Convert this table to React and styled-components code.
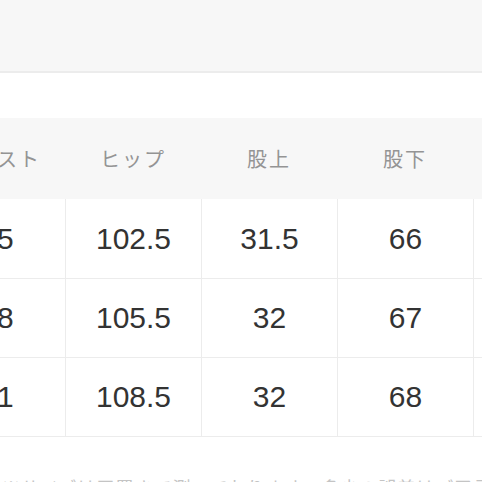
import React from 'react';
import styled, { createGlobalStyle } from 'styled-components';

const GlobalStyles = createGlobalStyle`
  html, body {
    margin: 0;
    padding: 0;
    background: #ffffff;
    overflow: hidden;
  }
  body {
    font-family: "Liberation Sans", "Noto Sans CJK JP", sans-serif;
  }
`;

const Page = styled.div`
  width: 482px;
  height: 482px;
  overflow: hidden;
  background: #fff;
`;

const TopBar = styled.div`
  height: 71px;
  background: #f7f7f7;
  border-bottom: 2px solid #ececec;
`;

const Gap = styled.div`
  height: 45px;
`;

const Table = styled.div`
  margin-left: -71px;
  width: 680px;
  border-bottom: 1px solid #ececec;
`;

const HeadRow = styled.div`
  display: grid;
  grid-template-columns: repeat(5, 136px);
  height: 81px;
  background: #f7f7f7;
`;

const HeadCell = styled.div`
  display: flex;
  align-items: center;
  justify-content: center;
  font-family: "Noto Sans CJK JP", sans-serif;
  font-size: 20px;
  letter-spacing: 2px;
  color: #949494;
`;

const Row = styled.div`
  display: grid;
  grid-template-columns: repeat(5, 136px);
  height: 79px;
  border-top: ${p => (p.$first ? 'none' : '1px solid #ececec')};
  box-sizing: border-box;
`;

const Cell = styled.div`
  display: flex;
  align-items: center;
  justify-content: center;
  font-family: "Liberation Sans", Arial, sans-serif;
  font-size: 30px;
  color: #333;
  border-left: ${p => (p.$first ? 'none' : '1px solid #ececec')};
`;

const Note = styled.p`
  margin: 37px 0 0 0;
  padding-left: 2px;
  font-family: "Noto Sans CJK JP", sans-serif;
  font-size: 18px;
  letter-spacing: 1px;
  color: #c4c4c4;
  white-space: nowrap;
`;

const headers = ['ウエスト', 'ヒップ', '股上', '股下', '裾幅'];
const rows = [
  ['75', '102.5', '31.5', '66', '19'],
  ['78', '105.5', '32', '67', '19.5'],
  ['81', '108.5', '32', '68', '20'],
];

const App = () => {
  return (
    <Page>
      <GlobalStyles />
      <TopBar />
      <Gap />
      <Table>
        <HeadRow>
          {headers.map(h => <HeadCell key={h}>{h}</HeadCell>)}
        </HeadRow>
        {rows.map((r, i) => (
          <Row key={i} $first={i === 0}>
            {r.map((v, j) => <Cell key={j} $first={j === 0}>{v}</Cell>)}
          </Row>
        ))}
      </Table>
      <Note>※サイズは平置きで測っております。多少の誤差はご了承ください。</Note>
    </Page>
  );
};

export default App;
